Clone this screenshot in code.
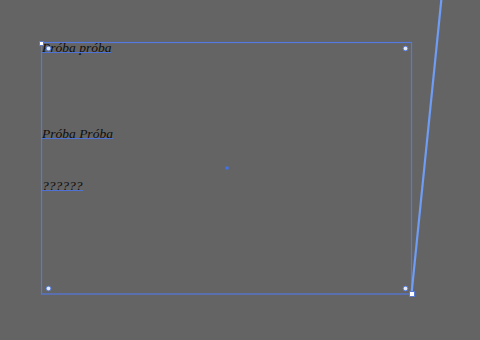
import React from "react";

const serif = { fontFamily: '"Liberation Serif", "Times New Roman", serif' };

function Label({ text, top, left }: { text: string; top: number; left: number }) {
  return (
    <div
      className="absolute italic text-[13.5px] leading-[14px] text-[#0f0f0f] whitespace-nowrap"
      style={{ ...serif, top, left }}
    >
      <span className="relative inline-block">
        {text}
        <span className="absolute left-0 right-0 top-[11px] h-px bg-[#4f72d6]" />
      </span>
    </div>
  );
}

export default function App() {
  return (
    <div className="relative w-[480px] h-[340px] bg-[#646464] overflow-hidden">
      <svg className="absolute inset-0" width={480} height={340} viewBox="0 0 480 340">
        <rect x={41.5} y={42.5} width={370} height={251.5} fill="none" stroke="#5479e0" strokeWidth={1.2} />
      </svg>
      <Label text="Próba próba" top={41} left={42} />
      <Label text="Próba Próba" top={127} left={42} />
      <Label text="??????" top={179} left={42} />
      <svg className="absolute inset-0" width={480} height={340} viewBox="0 0 480 340">
        <line x1={411.5} y1={294} x2={441.5} y2={-2} stroke="#6f9cf4" strokeWidth={2.2} />
        {[
          [48.5, 48.5],
          [405.5, 48.5],
          [48.5, 288.5],
          [405.5, 288.5],
        ].map(([x, y], i) => (
          <circle key={i} cx={x} cy={y} r={2.3} fill="#e4e9f7" stroke="#5b80e0" strokeWidth={1} />
        ))}
        <rect x={225.5} y={166.5} width={3} height={3} fill="#3f72f0" />
        <rect x={39.5} y={41.5} width={4} height={4} fill="#ffffff" stroke="#5a7ad0" strokeWidth={1} />
        <rect x={409.5} y={291.5} width={5} height={5} fill="#ffffff" stroke="#5a7ad0" strokeWidth={1} />
      </svg>
    </div>
  );
}
